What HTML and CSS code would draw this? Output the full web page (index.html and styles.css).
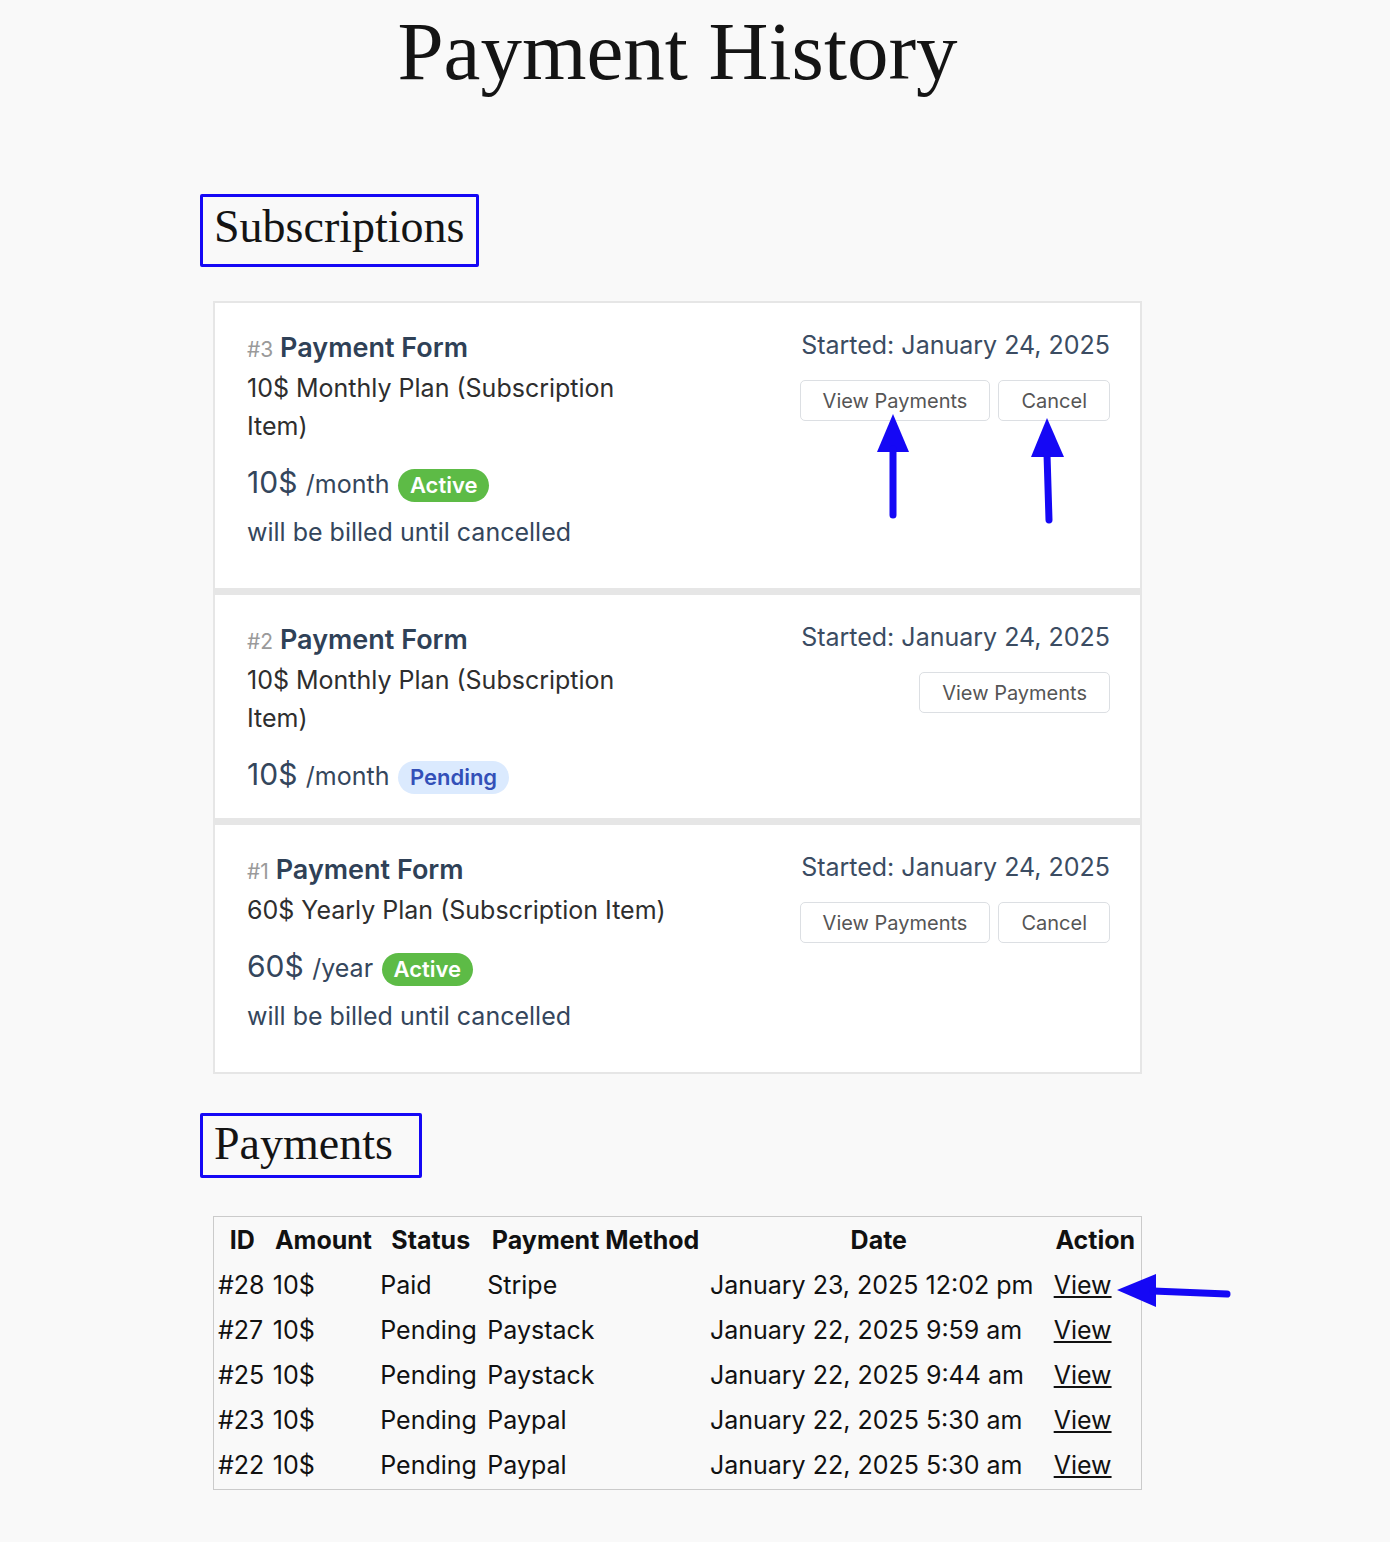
FILE: index.html
```html
<!DOCTYPE html>
<html lang="en">
<head>
  <meta charset="UTF-8" />
  <meta name="viewport" content="width=device-width, initial-scale=1.0"/>
  <title>Payment History</title>
  <link rel="stylesheet" href="styles.css">
</head>
<body>
  <div class="page">
    <h1 class="page-title">Payment History</h1>

    <h2 class="section-title section-subs">Subscriptions</h2>

    <div class="subs">
      <div class="sub-card">
        <div class="sub-info">
          <h3 class="sub-name"><span class="sub-id">#3</span> Payment Form</h3>
          <p class="sub-plan">10$ Monthly Plan (Subscription Item)</p>
          <div class="sub-amount">
            <span class="price">10$</span> <span class="interval">/month</span> <span class="badge badge-active">Active</span>
          </div>
          <p class="sub-billed">will be billed until cancelled</p>
        </div>
        <div class="sub-meta">
          <div class="started">Started: January 24, 2025</div>
          <div class="sub-actions">
            <button class="btn">View Payments</button>
            <button class="btn">Cancel</button>
          </div>
        </div>
        <!-- annotation arrows -->
        <svg class="annot annot-up" width="900" height="240" viewBox="0 0 900 240">
          <polygon points="678,111 662,149 694,149" fill="#1508f5"/>
          <line x1="678" y1="146" x2="678" y2="212" stroke="#1508f5" stroke-width="7" stroke-linecap="round"/>
          <polygon points="832,115 816,154 849,154" fill="#1508f5"/>
          <line x1="832" y1="151" x2="834" y2="217" stroke="#1508f5" stroke-width="7" stroke-linecap="round"/>
        </svg>
      </div>

      <div class="sub-card">
        <div class="sub-info">
          <h3 class="sub-name"><span class="sub-id">#2</span> Payment Form</h3>
          <p class="sub-plan">10$ Monthly Plan (Subscription Item)</p>
          <div class="sub-amount">
            <span class="price">10$</span> <span class="interval">/month</span> <span class="badge badge-pending">Pending</span>
          </div>
        </div>
        <div class="sub-meta">
          <div class="started">Started: January 24, 2025</div>
          <div class="sub-actions">
            <button class="btn">View Payments</button>
          </div>
        </div>
      </div>

      <div class="sub-card">
        <div class="sub-info">
          <h3 class="sub-name"><span class="sub-id">#1</span> Payment Form</h3>
          <p class="sub-plan">60$ Yearly Plan (Subscription Item)</p>
          <div class="sub-amount">
            <span class="price">60$</span> <span class="interval">/year</span> <span class="badge badge-active">Active</span>
          </div>
          <p class="sub-billed">will be billed until cancelled</p>
        </div>
        <div class="sub-meta">
          <div class="started">Started: January 24, 2025</div>
          <div class="sub-actions">
            <button class="btn">View Payments</button>
            <button class="btn">Cancel</button>
          </div>
        </div>
      </div>
    </div>

    <h2 class="section-title section-payments">Payments</h2>

    <div class="payments-wrap">
      <table class="payments">
        <thead>
          <tr>
            <th>ID</th>
            <th>Amount</th>
            <th>Status</th>
            <th>Payment Method</th>
            <th>Date</th>
            <th>Action</th>
          </tr>
        </thead>
        <tbody>
          <tr>
            <td>#28</td><td>10$</td><td>Paid</td><td>Stripe</td>
            <td>January 23, 2025 12:02 pm</td><td><a href="#">View</a></td>
          </tr>
          <tr>
            <td>#27</td><td>10$</td><td>Pending</td><td>Paystack</td>
            <td>January 22, 2025 9:59 am</td><td><a href="#">View</a></td>
          </tr>
          <tr>
            <td>#25</td><td>10$</td><td>Pending</td><td>Paystack</td>
            <td>January 22, 2025 9:44 am</td><td><a href="#">View</a></td>
          </tr>
          <tr>
            <td>#23</td><td>10$</td><td>Pending</td><td>Paypal</td>
            <td>January 22, 2025 5:30 am</td><td><a href="#">View</a></td>
          </tr>
          <tr>
            <td>#22</td><td>10$</td><td>Pending</td><td>Paypal</td>
            <td>January 22, 2025 5:30 am</td><td><a href="#">View</a></td>
          </tr>
        </tbody>
      </table>
      <!-- annotation arrow -->
      <svg class="annot annot-left" width="140" height="60" viewBox="0 0 140 60">
        <polygon points="4,34 43,18 43,51" fill="#1508f5"/>
        <line x1="40" y1="35" x2="114" y2="38" stroke="#1508f5" stroke-width="7" stroke-linecap="round"/>
      </svg>
    </div>
  </div>
</body>
</html>
```

FILE: styles.css
```css
* {
  box-sizing: border-box;
}

body {
  margin: 0;
  background-color: #f9f9f9;
  font-family: Inter, "Noto Sans", sans-serif;
  color: #111;
}

.page {
  width: 929px;
  margin-left: 213px;
  padding-bottom: 48px;
}

.page-title {
  margin: 0;
  padding-top: 3px;
  text-align: center;
  font-family: "Liberation Serif", serif;
  font-weight: normal;
  font-size: 83px;
  color: #141414;
}

.section-title {
  display: inline-block;
  margin: 0 0 0 -13px;
  font-family: "Liberation Serif", serif;
  font-weight: normal;
  font-size: 46px;
  color: #141414;
  border: 3px solid #1508f5;
  border-radius: 2px;
}

.section-subs {
  margin-top: 95px;
  padding: 3px 12px 11px 11px;
}

.section-payments {
  margin-top: 39px;
  padding: 1px 26px 5px 11px;
}

/* subscriptions */
.subs {
  margin-top: 34px;
}

.sub-card {
  position: relative;
  display: flex;
  background: #fff;
  border: 2px solid #e6e6e6;
  padding: 26px 30px 22px 32px;
}

.sub-card + .sub-card {
  border-top-width: 5px;
}

.sub-info {
  max-width: 425px;
}

.sub-name {
  margin: 0;
  font-size: 27px;
  line-height: 38px;
  font-weight: 600;
  color: #2f4157;
}

.sub-id {
  font-size: 21px;
  font-weight: normal;
  color: #9a9a9a;
}

.sub-plan {
  margin: 0;
  font-size: 25px;
  line-height: 38px;
  color: #2e2e2e;
}

.sub-amount {
  margin-top: 17px;
  font-size: 30px;
  line-height: 40px;
  color: #34465c;
}

.interval {
  font-size: 25px;
}

.badge {
  display: inline-block;
  padding: 2px 12px;
  border-radius: 17px;
  font-size: 22px;
  line-height: 29px;
  font-weight: 600;
}

.badge-active {
  background: #5dbb46;
  color: #fff;
}

.badge-pending {
  background: #dbeafe;
  color: #3350b8;
}

.sub-billed {
  margin: 9px 0 15px;
  font-size: 25px;
  line-height: 38px;
  color: #34465c;
}

.sub-meta {
  margin-left: auto;
  text-align: right;
}

.started {
  font-size: 25px;
  line-height: 32px;
  color: #3b4c62;
}

.sub-actions {
  display: flex;
  justify-content: flex-end;
  gap: 8px;
  margin-top: 19px;
}

.btn {
  height: 41px;
  padding: 0 22px;
  background: #fff;
  border: 1px solid #dcdfe3;
  border-radius: 5px;
  font-family: Inter, sans-serif;
  font-size: 20px;
  color: #555;
  cursor: pointer;
}

/* annotations drawn over the screenshot */
.annot {
  position: absolute;
  left: 0;
  top: 0;
  overflow: visible;
  pointer-events: none;
}

.annot-left {
  left: 900px;
  top: 40px;
}

/* payments table */
.payments-wrap {
  position: relative;
  margin-top: 38px;
}

.payments {
  width: 100%;
  border: 1px solid #cbcbcb;
  font-size: 25px;
  line-height: 31px;
}

.payments th,
.payments td {
  padding: 6px 2px;
  white-space: nowrap;
}

.payments td {
  text-align: left;
}

.payments a {
  color: #111;
}
```
